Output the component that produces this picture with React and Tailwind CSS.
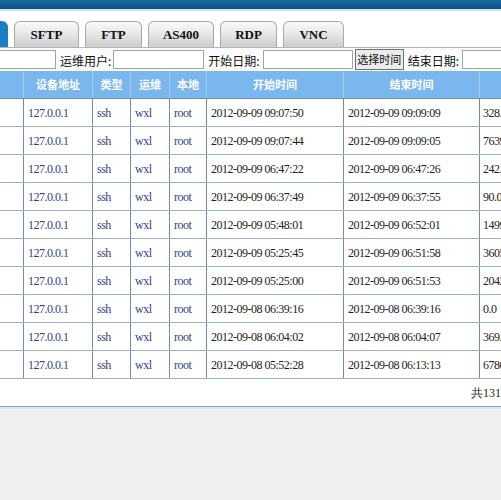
import React from "react";

const rows = [
  ["2012-09-09 09:07:50", "2012-09-09 09:09:09", "328."],
  ["2012-09-09 09:07:44", "2012-09-09 09:09:05", "7639"],
  ["2012-09-09 06:47:22", "2012-09-09 06:47:26", "242."],
  ["2012-09-09 06:37:49", "2012-09-09 06:37:55", "90.0"],
  ["2012-09-09 05:48:01", "2012-09-09 06:52:01", "1499"],
  ["2012-09-09 05:25:45", "2012-09-09 06:51:58", "3605"],
  ["2012-09-09 05:25:00", "2012-09-09 06:51:53", "2042"],
  ["2012-09-08 06:39:16", "2012-09-08 06:39:16", "0.0"],
  ["2012-09-08 06:04:02", "2012-09-08 06:04:07", "369."],
  ["2012-09-08 05:52:28", "2012-09-08 06:13:13", "6780"],
];

const tabs = [
  { label: "SFTP", w: "w-[65px]" },
  { label: "FTP", w: "w-[57px]" },
  { label: "AS400", w: "w-[66px]" },
  { label: "RDP", w: "w-[57px]" },
  { label: "VNC", w: "w-[61px]" },
];

const serif = "font-['Liberation_Serif','Times_New_Roman',serif]";
const cjk = "font-['Noto_Sans_CJK_SC','Noto_Sans',sans-serif]";

function Tab({ label, w }) {
  return (
    <div
      className={`${w} h-[26px] flex items-center justify-center rounded-t-[6px] border border-b-0 border-[#a9a9a9] bg-gradient-to-b from-[#fafafa] via-[#e6e6e6] to-[#cdcdcd] text-[13px] font-bold text-[#111] ${serif}`}
    >
      {label}
    </div>
  );
}

function Label({ children }) {
  return <span className={`text-[12px] text-[#111] ${cjk} whitespace-nowrap`}>{children}</span>;
}

export default function App() {
  const cell = "border-r border-[#6f8fae] px-[4px] whitespace-nowrap overflow-hidden";
  const head = "shrink-0 border-r border-[#a6cdf2] flex items-center justify-center";
  return (
    <div className="w-[501px] h-[500px] overflow-hidden bg-[#efefef] flex flex-col">
      {/* top bar */}
      <div className="h-[9px] bg-gradient-to-b from-[#1a6aa0] to-[#0b4f82]" />
      <div className="h-[2px] bg-[#cfe2ef]" />

      <div className="bg-white flex flex-col">
        {/* tabs */}
        <div className="flex items-end gap-[6px] pt-[10px] border-b border-[#b5b5b5]">
          <div className="w-[8px] h-[26px] bg-[#1b7fc6] rounded-tr-[6px]" />
          {tabs.map((t) => (
            <Tab key={t.label} {...t} />
          ))}
        </div>

        {/* filter row */}
        <div className="h-[23px] flex items-center bg-[#fbfbfb]">
          <div className="w-[56px] h-[19px] border border-l-0 border-[#a3a3a3] bg-white shrink-0" />
          <div className="ml-[4px]"><Label>运维用户:</Label></div>
          <div className="ml-[2px] w-[91px] h-[19px] border border-[#a3a3a3] bg-white shrink-0" />
          <div className="ml-[4px]"><Label>开始日期:</Label></div>
          <div className="ml-[3px] w-[90px] h-[19px] border border-[#a3a3a3] bg-white shrink-0" />
          <button className={`ml-[2px] h-[21px] w-[49px] shrink-0 border border-[#707070] bg-[#ececec] text-[11px] leading-none whitespace-nowrap text-[#111] ${cjk} px-0`}>
            选择时间
          </button>
          <div className="ml-[4px]"><Label>结束日期:</Label></div>
          <div className="ml-[3px] w-[60px] h-[19px] border border-[#a3a3a3] bg-white shrink-0" />
        </div>

        {/* table */}
        <div className="flex flex-col">
          <div className={`h-[28px] flex bg-[#7ab7ee] text-white font-bold text-[11px] ${cjk} border-b border-[#6f8fae]`}>
            <div className="w-[24px] shrink-0 border-r border-[#a6cdf2]" />
            <div className={`w-[69px] ${head}`}>设备地址</div>
            <div className={`w-[38px] ${head}`}>类型</div>
            <div className={`w-[39px] ${head}`}>运维</div>
            <div className={`w-[37px] ${head}`}>本地</div>
            <div className={`w-[137px] ${head}`}>开始时间</div>
            <div className={`w-[136px] ${head}`}>结束时间</div>
            <div className="w-[60px] shrink-0" />
          </div>
          {rows.map((r, i) => (
            <div key={i} className={`h-[28px] flex items-center bg-white border-b border-[#9fb0c0] text-[12px] tracking-[-0.5px] ${serif}`}>
              <div className={`w-[24px] h-full shrink-0 ${cell}`} />
              <div className={`w-[69px] h-full shrink-0 flex items-center text-[#33408a] ${cell}`}>127.0.0.1</div>
              <div className={`w-[38px] h-full shrink-0 flex items-center text-[#33408a] ${cell}`}>ssh</div>
              <div className={`w-[39px] h-full shrink-0 flex items-center text-[#33408a] ${cell}`}>wxl</div>
              <div className={`w-[37px] h-full shrink-0 flex items-center text-[#33408a] ${cell}`}>root</div>
              <div className={`w-[137px] h-full shrink-0 flex items-center text-[#222] ${cell}`}>{r[0]}</div>
              <div className={`w-[136px] h-full shrink-0 flex items-center text-[#222] ${cell}`}>{r[1]}</div>
              <div className="w-[60px] h-full shrink-0 flex items-center px-[3px] text-[#222] whitespace-nowrap">{r[2]}</div>
            </div>
          ))}
          <div className={`h-[27px] flex items-center justify-end text-[12px] text-[#222] ${serif}`}>
            <span className="whitespace-nowrap">共131</span>
          </div>
        </div>
      </div>
      <div className="h-[1px] bg-[#8ea6ba]" />
      <div className="h-[2px] bg-[#dde9f3]" />
      <div className="flex-1 bg-[#efefef]" />
    </div>
  );
}
